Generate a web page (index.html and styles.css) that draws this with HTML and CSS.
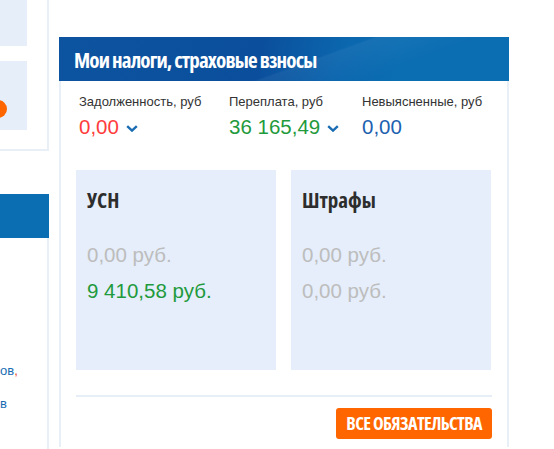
FILE: index.html
```html
<!DOCTYPE html>
<html lang="ru">
<head>
<meta charset="utf-8">
<link rel="stylesheet" href="styles.css">
</head>
<body>
<div class="page">
  <aside class="side">
    <div class="side-card">
      <div class="side-box side-box-1"></div>
      <div class="side-box side-box-2"><span class="side-dot"></span></div>
    </div>
    <div class="side-bar"></div>
    <div class="side-list">
      <p class="side-link">ов<span class="comma">,</span></p>
      <p class="side-link">в</p>
    </div>
  </aside>
  <section class="panel">
    <header class="panel-head">
      <h2 class="panel-title">Мои налоги, страховые взносы</h2>
    </header>
    <div class="panel-body">
      <div class="stats">
        <div class="stat stat-1">
          <div class="stat-label">Задолженность, руб</div>
          <div class="stat-value red">0,00 <svg class="chev" viewBox="0 0 12 7" width="12" height="7"><path d="M1.2 1.2 L6 5.6 L10.8 1.2" fill="none" stroke="#1a6db3" stroke-width="2.4"/></svg></div>
        </div>
        <div class="stat stat-2">
          <div class="stat-label">Переплата, руб</div>
          <div class="stat-value green">36 165,49 <svg class="chev" viewBox="0 0 12 7" width="12" height="7"><path d="M1.2 1.2 L6 5.6 L10.8 1.2" fill="none" stroke="#1a6db3" stroke-width="2.4"/></svg></div>
        </div>
        <div class="stat stat-3">
          <div class="stat-label">Невыясненные, руб</div>
          <div class="stat-value blue">0,00</div>
        </div>
      </div>
      <div class="cards">
        <div class="card">
          <h3 class="card-title">УСН</h3>
          <div class="card-val gray">0,00 руб.</div>
          <div class="card-val green">9 410,58 руб.</div>
        </div>
        <div class="card">
          <h3 class="card-title">Штрафы</h3>
          <div class="card-val gray">0,00 руб.</div>
          <div class="card-val gray">0,00 руб.</div>
        </div>
      </div>
      <div class="sep"></div>
      <div class="actions">
        <a class="btn" href="#">Все обязательства</a>
      </div>
    </div>
  </section>
</div>
</body>
</html>
```
FILE: styles.css
```css
* { box-sizing: border-box; }
html, body { margin: 0; padding: 0; background: #fff; }
body {
  width: 554px;
  height: 449px;
  overflow: hidden;
  font-family: "Liberation Sans", Arial, sans-serif;
  color: #333;
}
.page {
  display: flex;
  align-items: flex-start;
}
.side {
  width: 49px;
  flex: none;
}
.side-card {
  height: 151px;
  border-right: 2px solid #e8eff7;
  border-bottom: 2px solid #e8eff7;
}
.side-box {
  width: 27px;
  background: #e6eef9;
  position: relative;
}
.side-box-1 { height: 46px; }
.side-box-2 { height: 69px; margin-top: 15px; }
.side-dot {
  position: absolute;
  left: -11px;
  top: 39px;
  width: 18px;
  height: 18px;
  border-radius: 50%;
  background: #ff6600;
}
.side-bar {
  margin-top: 43px;
  height: 44px;
  background: #0b6db2;
}
.side-list {
  height: 211px;
  border-right: 2px solid #e8eff7;
  padding-top: 125px;
}
.side-link {
  margin: 0 0 18px;
  font-size: 13px;
  line-height: 15px;
  color: #1a6db3;
}
.comma { color: #e8442a; }

.panel {
  margin-left: 10px;
  margin-top: 37px;
  width: 450px;
  flex: none;
}
.panel-head {
  height: 44px;
  background:
    linear-gradient(160deg, rgba(255,255,255,0) 0%, rgba(255,255,255,0) 55%, rgba(255,255,255,0.05) 56%, rgba(255,255,255,0) 75%),
    linear-gradient(100deg, #0c53a0 0%, #0b4f9c 45%, #0b66ae 62%, #0b6db2 75%);
  display: flex;
  align-items: center;
  padding-left: 15px;
}
.panel-title {
  margin: 0;
  color: #fff;
  font-family: "Open Sans", "Roboto", sans-serif;
  font-stretch: 75%;
  font-weight: 700;
  font-size: 21px;
  line-height: 26px;
  letter-spacing: -0.85px;
  padding-top: 2px;
}
.panel-body {
  border-left: 2px solid #e8eff7;
  border-right: 2px solid #e8eff7;
  padding: 13px 15px 8px;
}
.stats {
  display: flex;
  padding-left: 3px;
}
.stat-1 { width: 150px; }
.stat-2 { width: 133px; }
.stat-label {
  font-size: 13px;
  line-height: 16px;
  color: #333;
}
.stat-value {
  font-size: 20.5px;
  line-height: 24px;
  margin-top: 5px;
  display: flex;
  align-items: center;
  white-space: pre;
}
.chev { margin-left: 1px; margin-top: 3px; }
.red { color: #ff3d3d; }
.green { color: #1f9a3c; }
.blue { color: #1c61b0; }
.gray { color: #bdbdbd; }

.cards {
  display: grid;
  grid-template-columns: 200px 200px;
  column-gap: 15px;
  margin-top: 31px;
}
.card {
  height: 200px;
  background: #e5eefa;
  padding: 17px 11px;
}
.card-title {
  margin: 0 0 30px;
  font-family: "Open Sans", "Roboto", sans-serif;
  font-stretch: 75%;
  font-weight: 700;
  font-size: 21px;
  line-height: 26px;
  color: #2d2d2d;
}
.card-val {
  font-size: 20.5px;
  line-height: 24px;
  margin-bottom: 12px;
}
.sep {
  margin-top: 25px;
  height: 2px;
  background: #e6eef7;
}
.actions {
  display: flex;
  justify-content: flex-end;
  margin-top: 11px;
}
.btn {
  display: inline-block;
  background: #ff6600;
  color: #fff;
  text-decoration: none;
  text-transform: uppercase;
  border-radius: 3px;
  height: 31px;
  line-height: 31px;
  padding: 0 10px;
  font-family: "Open Sans", "Roboto", sans-serif;
  font-stretch: 75%;
  font-weight: 700;
  font-size: 18px;
  letter-spacing: -0.6px;
}
```
